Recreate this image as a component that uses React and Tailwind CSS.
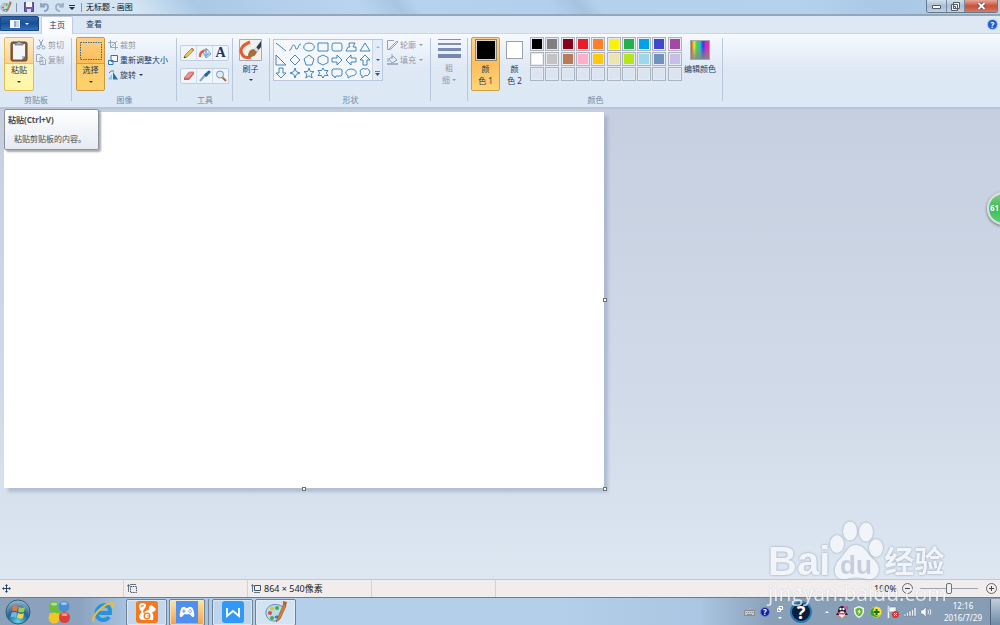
import React, { useState } from 'react';

const PALETTE = [
    '#000000', '#7f7f7f', '#880015', '#ed1c24', '#ff7f27', '#fff200', '#22b14c', '#00a2e8', '#3f48cc', '#a349a4',
    '#ffffff', '#c3c3c3', '#b97a57', '#ffaec9', '#ffc90e', '#efe4b0', '#b5e61d', '#99d9ea', '#7092be', '#c8bfe7',
    null, null, null, null, null, null, null, null, null, null,
];

const SHAPES = [
    { name: '直线', d: 'M1 2L11 10' },
    { name: '曲线', d: 'M0 9C2 11 3 3 5 4S6 9 8 8S9 3 12 3' },
    { name: '椭圆形', d: 'M6 2C13 2 13 10 6 10S-1 2 6 2Z' },
    { name: '矩形', d: 'M1 2H11V10H1Z' },
    { name: '圆角矩形', d: 'M3 2H9Q11 2 11 4V8Q11 10 9 10H3Q1 10 1 8V4Q1 2 3 2Z' },
    { name: '多边形', d: 'M4 2H10L8 6H11V10H1L3 6H5L4 4Z' },
    { name: '三角形', d: 'M6 2L11 10H1Z' },
    { name: '直角三角形', d: 'M1 1V11H11Z' },
    { name: '菱形', d: 'M6 1L11 6L6 11L1 6Z' },
    { name: '五边形', d: 'M6 1L11 5L9 11H3L1 5Z' },
    { name: '六边形', d: 'M6 1L11 3.500V8.500L6 11L1 8.500V3.500Z' },
    { name: '右箭头', d: 'M1 4H6V1L11 6L6 11V8H1Z' },
    { name: '左箭头', d: 'M11 4H6V1L1 6L6 11V8H11Z' },
    { name: '上箭头', d: 'M4 11V6H1L6 1L11 6H8V11Z' },
    { name: '下箭头', d: 'M4 1V6H1L6 11L11 6H8V1Z' },
    { name: '四角星', d: 'M6 1L7.300 4.700L11 6L7.300 7.300L6 11L4.700 7.300L1 6L4.700 4.700Z' },
    { name: '五角星', d: 'M6 1L7.400 4.600H11L8.200 7L9.200 11L6 8.700L2.800 11L3.800 7L1 4.600H4.600Z' },
    { name: '六角星', d: 'M6 1L7.500 3.500H11L9.300 6L11 8.500H7.500L6 11L4.500 8.500H1L2.700 6L1 3.500H4.500Z' },
    { name: '圆角标注', d: 'M2 2H10L11 3V8L10 9H5L4 11L3 9H2L1 8V3Z' },
    { name: '椭圆标注', d: 'M6 2C13 2 13 9 6 9L3 11V8.500C-1 7 1 2 6 2Z' },
    { name: '云形标注', d: 'M3 2Q5 1 6 2Q9 1 10 3Q12 5 10 7Q9 9.500 6 8.500L3 11V8.500Q0 8 1.500 5.500Q0 3 3 2Z' },
];

const Caret = ({ className = '' }) => (
    <svg viewBox="0 0 4 2" className={`w-[4px] h-[2px] shrink-0 ${className}`} fill="currentColor"><path d="M0 0H4L2 2Z" /></svg>
);

const Group = ({ label, className = '', children }) => (
    <section aria-label={label} className={`relative shrink-0 flex flex-col pt-[3px] ${className}`}>
        <div className="flex h-[56px]">{children}</div>
        {label && <div className="text-center text-[8px] leading-[14px] text-[#7487a4]">{label}</div>}
        <span className="absolute right-0 top-[4px] bottom-[6px] w-px bg-[#b9c7dc]"></span>
    </section>
);

const SmallButton = ({ icon, label, muted, caret }) => (
    <button className={`flex items-center gap-[2px] h-[15px] text-[8px] whitespace-nowrap ${muted ? 'text-[#919aa8]' : 'text-[#1e395b]'}`}>
        {icon}
        <span>{label}</span>
        {caret && <Caret className="ml-px" />}
    </button>
);

const ToolButton = ({ label, children }) => (
    <button aria-label={label} className="flex-1 h-full flex items-center justify-center border-r border-[#d3deec] last:border-r-0">
        <svg viewBox="0 0 12 12" className="w-[12px] h-[12px]">{children}</svg>
    </button>
);

const PaintIcon = ({ className }) => (
    <svg viewBox="0 0 24 24" className={className}>
        <path d="M2 14C1 7 8 3 15 5C21 7 20 11 17 12C15 13 18 16 15 19C11 23 3 21 2 14Z" fill="#b6dcf0" stroke="#5f91b5" />
        <circle cx="6" cy="13" r="2" fill="#e8483e" />
        <circle cx="8" cy="8.500" r="2" fill="#e9bf35" />
        <circle cx="13" cy="8" r="2" fill="#4daa43" />
        <circle cx="8" cy="18" r="2" fill="#55a34c" />
        <ellipse cx="13" cy="17" rx="2.500" ry="1.500" fill="#4478c0" />
        <path d="M20 3L15 15L12 22L16 19L22 6Z" fill="#cf8337" stroke="#985a22" strokeWidth=".7" />
        <path d="M19 1L23 2L22 6L19 5Z" fill="#b3663a" />
    </svg>
);

const TitleBar = () => (
    <header className="relative h-[16px] shrink-0 flex items-center bg-[linear-gradient(55deg,#d3e3f1_0%,#d3e4f3_14%,#a9c9e4_20%,#b3cfeb_28%,#b9d4ee_36%,#a8c6e2_40%,#b5d2ee_42%,#b2d0ed_55%,#a5c3e0_58%,#b4d1ec_60%,#b4d2ed_80%,#a9c8e6_88%,#b5d0ea_100%)] border-b-2 border-[#95a6b8]">
        <PaintIcon className="w-[12px] h-[12px]" />
        <span className="ml-[4px] w-px h-[9px] bg-[#8296ad]"></span>
        <button aria-label="保存" className="ml-[7px]">
            <svg viewBox="0 0 10 10" className="w-[10px] h-[10px]">
                <path d="M.5 .5H9.500V9.500H.5Z" fill="#765caf" stroke="#57428f" />
                <path d="M2 0H8V5H2Z" fill="#f3f3fb" />
                <path d="M3 7H7V10H3Z" fill="#d6d7e6" />
            </svg>
        </button>
        <button aria-label="撤消" className="ml-[6px]">
            <svg viewBox="0 0 10 10" className="w-[10px] h-[10px]" fill="none" stroke="#8aa3c2" strokeWidth="1.8"><path d="M1 1V4.500H5M1.500 4C4 1 8 2 8 5S6 9 4 9" /></svg>
        </button>
        <button aria-label="恢复" className="ml-[4px]">
            <svg viewBox="0 0 10 10" className="w-[10px] h-[10px]" fill="none" stroke="#9ab0ca" strokeWidth="1.8"><path d="M9 1V4.500H5M8.500 4C6 1 2 2 2 5S4 9 6 9" /></svg>
        </button>
        <button aria-label="自定义快速访问工具栏" className="ml-[5px]">
            <svg viewBox="0 0 6 6" className="w-[6px] h-[6px]" fill="#26313f"><path d="M0 1H6V2H0ZM0 3H6L3 6Z" /></svg>
        </button>
        <span className="ml-[6px] w-px h-[9px] bg-[#8296ad]"></span>
        <h1 className="ml-[4px] text-[8px] leading-[14px] text-[#0c1118]">无标题 - 画图</h1>
        <div className="ml-auto mr-[2px] h-[13px] self-start flex border border-t-0 border-[#64798e] rounded-b-[3px] overflow-hidden">
            <button aria-label="最小化" className="w-[20px] flex items-center justify-center bg-linear-to-b from-[#d3e0ec] via-[#a9bdd2] to-[#bfd2e5] border-r border-[#758a9e]">
                <svg viewBox="0 0 9 4" className="w-[9px] h-[4px] mt-px"><path d="M.5 .5H8.500V3.500H.5Z" fill="#fff" stroke="#535b68" /></svg>
            </button>
            <button aria-label="还原" className="w-[18px] flex items-center justify-center bg-linear-to-b from-[#d3e0ec] via-[#a9bdd2] to-[#bfd2e5] border-r border-[#758a9e]">
                <svg viewBox="0 0 9 9" className="w-[9px] h-[9px]" fill="#f2f4f7" stroke="#535b68"><path d="M2.500 .5H8.500V6.500H2.500ZM.5 2.500H6.500V8.500H.5ZM2.500 4.500H4.500V6.500H2.500Z" /></svg>
            </button>
            <button aria-label="关闭" className="w-[32px] flex items-center justify-center bg-linear-to-b from-[#e8a697] via-[#c4513a] to-[#d97a60]">
                <svg viewBox="0 0 9 8" className="w-[9px] h-[8px]"><path d="M1.500 1L7.500 7M7.500 1L1.500 7" stroke="#5c4448" strokeWidth="3.500" /><path d="M1.500 1L7.500 7M7.500 1L1.500 7" stroke="#fff" strokeWidth="2" /></svg>
            </button>
        </div>
    </header>
);

const TabRow = () => (
    <nav className="relative h-[18px] shrink-0 flex items-end bg-[#dee8f5] border-b border-[#cdd6e6] text-[8px] text-[#1e395b]">
        <button aria-label="文件" className="mb-[2px] w-[39px] h-[15px] flex items-center justify-center gap-[5px] text-white bg-linear-to-b from-[#2c66ac] via-[#1b4e97] to-[#3072bb] border border-[#17458a] rounded-tr-[2px]">
            <svg viewBox="0 0 10 8" className="w-[10px] h-[8px]"><path d="M0 0H10V8H0Z" fill="#f5f8fd" /><path d="M5 1V7" stroke="#2c5f9e" /><path d="M6 2H9M6 4H9M6 6H9" stroke="#7798c1" strokeWidth=".7" /></svg>
            <Caret />
        </button>
        <button className="ml-[2px] -mb-px w-[32px] h-[18px] pb-px bg-[#fafcff] border border-b-0 border-[#c0cce0] rounded-t-[2px]">主页</button>
        <button className="ml-[5px] w-[32px] h-[18px]">查看</button>
        <button aria-label="帮助" className="ml-auto mr-[3px] mb-[4px] w-[9px] h-[9px] rounded-full bg-[#1e5ec9] ring-1 ring-[#a5c0e8] text-white font-bold text-[8px] leading-[9px]">?</button>
    </nav>
);

const Ribbon = () => (
    <div className="relative z-10 h-[75px] shrink-0 flex bg-linear-to-b from-[#f7faff] via-[#dfe9f5] via-45% to-[#dce8f6] border-b-2 border-[#b6c5da]">
        <Group label="剪贴板" className="w-[72px]">
            <button aria-describedby="paste-tip" className="ml-[4px] w-[30px] h-[54px] flex flex-col items-center text-[8px] text-[#1e395b] rounded-[2px] border border-[#e5bb58] bg-linear-to-b from-[#fbe3b6] via-[#fff6b8] to-[#fff6a6]">
                <span className="w-full h-[26px] flex items-center justify-center bg-linear-to-b from-[#fdeecf] to-[#fbd28a] border-b border-[#e6c36c]">
                    <svg viewBox="0 0 18 22" className="w-[18px] h-[22px]">
                        <rect x="1" y="2" width="16" height="19" rx="1.500" fill="#8a6243" stroke="#5d4131" />
                        <path d="M3 4H15V16L12 19.500H3Z" fill="#f3f5f9" />
                        <path d="M15 16H12V19.500Z" fill="#aab4c2" />
                        <path d="M5 5V3H7Q9 -1 11 3H13V5Z" fill="#aaafb7" stroke="#666b73" strokeWidth=".7" />
                    </svg>
                </span>
                <span className="leading-[12px]">粘贴</span>
                <Caret className="mt-[5px]" />
            </button>
            <div className="ml-[2px] flex flex-col">
                <SmallButton muted label="剪切" icon={
                    <svg viewBox="0 0 10 10" className="w-[10px] h-[11px]" fill="none" stroke="#8fa3bd"><path d="M3 0L6.500 7M7 0L3.500 7" /><circle cx="2.500" cy="8" r="1.500" /><circle cx="7.500" cy="8" r="1.500" /></svg>
                } />
                <SmallButton muted label="复制" icon={
                    <svg viewBox="0 0 10 11" className="w-[10px] h-[11px]" fill="#eef3fa" stroke="#9aabc4"><path d="M.5 .5H4L6 2.500V7.500H.5ZM4 3.500H7.500L9.500 5.500V10.500H4Z" /><path d="M5.500 7H8M5.500 9H8" /></svg>
                } />
            </div>
            <div id="paste-tip" role="tooltip" className="absolute left-[4px] top-full mt-[2px] w-[95px] h-[41px] pt-[4px] pl-[3px] whitespace-nowrap text-[8px] text-[#4c4c4c] bg-linear-to-b from-white to-[#e5eaf4] border border-[#8d919a] rounded-[2px] shadow-[2px_2px_2px_#00000055]">
                <p className="font-bold leading-[12px]">粘贴(Ctrl+V)</p>
                <p className="mt-[7px] ml-[6px] leading-[12px]">粘贴剪贴板的内容。</p>
            </div>
        </Group>

        <Group label="图像" className="w-[105px]">
            <button className="ml-[4px] w-[29px] h-[54px] shrink-0 flex flex-col items-center text-[8px] text-[#1e395b] rounded-[2px] border border-[#c9983f] bg-linear-to-b from-[#fdc865] to-[#ffd06c]">
                <span className="w-full h-[26px] flex items-center justify-center bg-linear-to-b from-[#fbcf83] to-[#fdbd55] border-b border-[#d79e37]">
                    <svg viewBox="0 0 22 18" className="w-[22px] h-[18px]"><path d="M.5 .5H21.500V17.500H.5Z" fill="none" stroke="#3b6791" strokeDasharray="1.500 1" /></svg>
                </span>
                <span className="leading-[12px]">选择</span>
                <Caret className="mt-[5px]" />
            </button>
            <div className="ml-[3px] flex flex-col items-start">
                <SmallButton muted label="裁剪" icon={
                    <svg viewBox="0 0 10 10" className="w-[10px] h-[10px]" fill="none" stroke="#9aa9bf"><path d="M2.500 0V7.500H10M0 2.500H7.500V10M3 7L9 1" /></svg>
                } />
                <SmallButton label="重新调整大小" icon={
                    <svg viewBox="0 0 10 10" className="w-[10px] h-[10px]" fill="#f4f9ff" stroke="#2e74b5"><path d="M3 .5H9.500V6.500H3ZM.5 5.500H5V9.500H.5Z" /></svg>
                } />
                <SmallButton label="旋转" caret icon={
                    <svg viewBox="0 0 10 10" className="w-[10px] h-[10px]"><path d="M5 9.500V2L10 9.500Z" fill="#2674ae" /><path d="M0 9.500L4 4V9.500Z" fill="#93c6e9" /><path d="M1 3Q3 0 6 1" fill="none" stroke="#4083b7" /></svg>
                } />
            </div>
        </Group>

        <Group label="工具" className="w-[56px]">
            <div className="ml-[3px] mt-[8px] w-[49px] flex flex-col gap-[7px]">
                <div className="h-[16px] flex rounded-[2px] border border-[#c1cee0] bg-[#eff5fc]">
                    <ToolButton label="铅笔">
                        <path d="M1 11L2 8L9 1L11 3L4 10Z" fill="#efc250" stroke="#9c793c" strokeWidth=".7" />
                        <path d="M8 2L9 1L11 3L10 4Z" fill="#d9766a" />
                        <path d="M1 11L1.600 9L3 10.400Z" fill="#333" />
                    </ToolButton>
                    <ToolButton label="填充">
                        <path d="M4 5L8 2L12 7L7 11Z" fill="#d5e6f5" stroke="#5f8dbd" strokeWidth=".8" />
                        <path d="M0 10Q-1 4 6 2L5 5Q2 6 2 10Z" fill="#e35b3b" />
                        <path d="M7 6V1" stroke="#6585aa" />
                        <path d="M5 7L11 6L7 10Z" fill="#6faede" />
                    </ToolButton>
                    <button aria-label="文本" className="flex-1 font-['Liberation_Serif',serif] font-bold text-[14px] leading-[14px] text-[#1f3657]">A</button>
                </div>
                <div className="h-[16px] flex rounded-[2px] border border-[#c1cee0] bg-[#eff5fc]">
                    <ToolButton label="橡皮擦">
                        <path d="M1 8L6 2H11L6 9Z" fill="#ee918b" stroke="#c3605c" strokeWidth=".6" />
                        <path d="M1 8H6V10H1ZM6 8L11 2V4L6 10Z" fill="#c86762" />
                    </ToolButton>
                    <ToolButton label="颜色选取器">
                        <path d="M1 11L7 4" stroke="#7fa8cc" strokeWidth="2" />
                        <path d="M6 4L8 6" stroke="#234e7d" strokeWidth="2" />
                        <path d="M7 5L10 2" stroke="#2f619b" strokeWidth="3" strokeLinecap="round" />
                    </ToolButton>
                    <ToolButton label="放大镜">
                        <path d="M7 7L11 11" stroke="#a37045" strokeWidth="2" />
                        <circle cx="5" cy="4.500" r="3.500" fill="#dceefa" stroke="#8693a4" />
                    </ToolButton>
                </div>
            </div>
        </Group>

        <Group className="w-[37px]">
            <button className="ml-[5px] w-[25px] h-[54px] flex flex-col items-center text-[8px] text-[#1e395b]">
                <svg viewBox="0 0 23 22" className="mt-[2px] w-[23px] h-[22px] shrink-0">
                    <path d="M.5 .5H22.500V21.500H.5Z" fill="#f4f1ec" stroke="#a6acb3" />
                    <path d="M11 3Q-1 8 3 15Q5 20 12 18" fill="none" stroke="#e65b2b" strokeWidth="3" />
                    <path d="M9 18Q9 10 15 10L18 13Q16 19 9 18Z" fill="#a56f3c" />
                    <path d="M16 10L22 2V8L18 13Z" fill="#2c3e54" />
                    <path d="M15 10L17 8L20 11L18 13Z" fill="#d1d8df" />
                </svg>
                <span className="mt-[2px] leading-[12px]">刷子</span>
                <Caret className="mt-[4px]" />
            </button>
        </Group>

        <Group label="形状" className="w-[161px]">
            <div className="ml-[3px] mt-[2px] w-[110px] h-[42px] shrink-0 flex border border-[#b7c8de] bg-[#f4f8fd]">
                <div className="w-[98px] grid grid-cols-7">
                    {SHAPES.map(s => (
                        <button key={s.name} aria-label={s.name} className="flex items-center justify-center">
                            <svg viewBox="0 0 12 12" className="w-[12px] h-[12px]" fill="none" stroke="#3279b1" strokeWidth=".9"><path d={s.d} /></svg>
                        </button>
                    ))}
                </div>
                <div className="w-[10px] flex flex-col border-l border-[#c9d6e6] bg-[#e4edf7] text-[#44566e]">
                    <button aria-label="上一行" className="flex-1 flex items-center justify-center text-[#a9b4c3]"><Caret className="rotate-180" /></button>
                    <button aria-label="下一行" className="flex-1 flex items-center justify-center"><Caret /></button>
                    <button aria-label="更多" className="flex-1 flex items-center justify-center">
                        <svg viewBox="0 0 6 6" className="w-[5px] h-[5px]" fill="currentColor"><path d="M0 0H6V1H0ZM0 2.500H6L3 6Z" /></svg>
                    </button>
                </div>
            </div>
            <div className="ml-[4px] flex flex-col items-start">
                <SmallButton muted caret label="轮廓" icon={
                    <svg viewBox="0 0 11 10" className="w-[11px] h-[10px]" fill="none" stroke="#8fa2bc"><path d="M7 .5H.5V9.500H3M3 8L10 1L11 2L4 9L2 9.500Z" /></svg>
                } />
                <SmallButton muted caret label="填充" icon={
                    <svg viewBox="0 0 11 11" className="w-[11px] h-[11px]"><path d="M2 5L6 2L10 6L5 9Z" fill="#e8eef6" stroke="#8fa2bc" /><path d="M5 5V0M1 8V4" stroke="#8fa2bc" /><path d="M0 9H11V11H0Z" fill="#a4b1c9" /></svg>
                } />
            </div>
        </Group>

        <Group className="w-[37px]">
            <button className="ml-[6px] w-[24px] h-[54px] flex flex-col items-center text-[8px] text-[#919aa8]">
                <span className="mt-[2px] mb-[4px] w-[23px] flex flex-col gap-[3px]">
                    <span className="h-px bg-[#8592ad]"></span>
                    <span className="h-[2px] bg-[#8190b0]"></span>
                    <span className="h-[3px] bg-[#7a8bb0]"></span>
                    <span className="h-[4px] bg-[#7488b1]"></span>
                </span>
                <span className="leading-[12px]">粗</span>
                <span className="leading-[12px] flex items-center gap-[2px]">细<Caret /></span>
            </button>
        </Group>

        <Group label="颜色" className="w-[255px]">
            <button className="ml-[3px] w-[29px] h-[54px] shrink-0 flex flex-col items-center text-[8px] leading-[12px] text-[#1e395b] rounded-[2px] border border-[#cf9f43] bg-linear-to-b from-[#fbd18c] via-[#fdbf5a] to-[#ffd577]">
                <span className="mt-px mb-[2px] w-[22px] h-[22px] bg-black border border-[#8a8578] ring-1 ring-inset ring-[#dcd5c5]"></span>
                <span>颜</span>
                <span>色 1</span>
            </button>
            <button className="w-[29px] h-[54px] shrink-0 flex flex-col items-center text-[8px] leading-[12px] text-[#1e395b]">
                <span className="mt-[4px] mb-[4px] w-[17px] h-[18px] bg-white border border-[#9ca2aa]"></span>
                <span>颜</span>
                <span>色 2</span>
            </button>
            <div className="ml-px w-[153px] shrink-0 grid grid-cols-10 gap-y-px content-start">
                {PALETTE.map((c, i) => (
                    <button key={i} aria-label={c || '自定义颜色'} style={{ backgroundColor: c || '#dbe5f2' }}
                        className="w-[14px] h-[14px] border border-[#aeb4bd] ring-1 ring-inset ring-[#e6eaf0]"></button>
                ))}
            </div>
            <button className="w-[34px] h-[54px] shrink-0 flex flex-col items-center text-[8px] text-[#1e395b] whitespace-nowrap">
                <span className="mt-[3px] w-[20px] h-[20px] border border-[#a4a8ae] bg-[linear-gradient(to_right,#ee342c,#f3e537,#32d846,#29bedb,#3d37d8,#cc2bd7,#ef3274)]">
                    <span className="block w-full h-full bg-linear-to-b from-transparent from-30% to-[#888888dd]"></span>
                </span>
                <span className="mt-[2px] leading-[13px]">编辑颜色</span>
            </button>
        </Group>
    </div>
);

const Handle = ({ className }) => (
    <span className={`absolute w-[4px] h-[4px] bg-white border border-[#6c716f] ${className}`}></span>
);

const Workspace = () => (
    <main className="relative flex-1 min-h-0 pt-[3px] pl-[4px] bg-linear-to-b from-[#c6cfdf] via-[#d0dae8] via-60% to-[#dde7f2]">
        <div className="relative w-[600px] h-[376px] bg-white shadow-[4px_4px_3px_#8b9dbd80]">
            <Handle className="-right-[3px] top-1/2 -mt-[2px]" />
            <Handle className="-bottom-[3px] left-1/2 -ml-[2px]" />
            <Handle className="-right-[3px] -bottom-[3px]" />
        </div>
        <div className="absolute -right-[20px] top-[83px] w-[33px] h-[33px] pl-px rounded-full border-2 border-[#d9e0dd] bg-linear-to-b from-[#77d07a] via-[#3cbb57] to-[#5cd46d] shadow-[0_1px_3px_#0008] text-white font-bold text-[8px] leading-[28px]">61</div>
    </main>
);

const Cell = ({ children }) => (
    <div className="w-[124px] shrink-0 flex items-center gap-[3px] pl-[3px] border-r border-[#d5d2d3]">{children}</div>
);

const StatusBar = () => {
    const [zoom, setZoom] = useState(50);
    return (
        <footer className="h-[18px] shrink-0 flex text-[9px] text-[#1e1e1e] bg-[#f0edec] border-t border-[#c5c8cc]">
            <Cell>
                <svg viewBox="0 0 9 9" className="-ml-px w-[9px] h-[9px]" stroke="#24415f" fill="#24415f"><path d="M4.500 1V8M1 4.500H8" /><path d="M4.500 0L6 2H3ZM4.500 9L6 7H3ZM0 4.500L2 3V6ZM9 4.500L7 3V6Z" stroke="none" /></svg>
            </Cell>
            <Cell>
                <svg viewBox="0 0 10 9" className="w-[10px] h-[9px]" fill="none" stroke="#40556c"><path d="M3.500 2.500H9.500V8.500H3.500Z" strokeDasharray="1.500 .8" /><path d="M1.500 1V8M0 2.500L1.500 .5L3 2.500M3 .5H9" strokeWidth=".8" /></svg>
            </Cell>
            <Cell>
                <svg viewBox="0 0 10 9" className="w-[10px] h-[9px]" fill="none" stroke="#40556c"><path d="M3.500 1.500H9.500V6.500H3.500Z" /><path d="M1.500 1V8M0 2.500L1.500 .5L3 2.500M3 8.500H9" strokeWidth=".8" /></svg>
                <span className="whitespace-nowrap">864 × 540像素</span>
            </Cell>
            <Cell />
            <div className="ml-auto mr-[3px] flex items-center">
                <label htmlFor="zoom">100%</label>
                <button aria-label="缩小" onClick={() => setZoom(zoom - 10)} className="ml-[5px] w-[11px] h-[11px] rounded-full border border-[#666b72] flex items-center justify-center"><span className="w-[5px] h-px bg-[#404650]"></span></button>
                <input id="zoom" type="range" value={zoom} onChange={e => setZoom(Number(e.target.value))}
                    className="ml-[7px] w-[58px] h-[12px] appearance-none bg-transparent [&::-webkit-slider-runnable-track]:h-px [&::-webkit-slider-runnable-track]:bg-[#a2a6ab] [&::-webkit-slider-thumb]:appearance-none [&::-webkit-slider-thumb]:-mt-[5px] [&::-webkit-slider-thumb]:w-[6px] [&::-webkit-slider-thumb]:h-[11px] [&::-webkit-slider-thumb]:rounded-[2px] [&::-webkit-slider-thumb]:border [&::-webkit-slider-thumb]:border-[#6e747b] [&::-webkit-slider-thumb]:bg-[#eef0f2]" />
                <button aria-label="放大" onClick={() => setZoom(zoom + 10)} className="ml-[8px] w-[11px] h-[11px] rounded-full border border-[#666b72] flex items-center justify-center">
                    <svg viewBox="0 0 5 5" className="w-[5px] h-[5px]" stroke="#404650"><path d="M2.500 0V5M0 2.500H5" /></svg>
                </button>
            </div>
        </footer>
    );
};

const TaskButton = ({ label, className, children }) => (
    <button aria-label={label} className={`h-[27px] shrink-0 flex items-center justify-center rounded-[2px] border border-[#6f8194] ring-1 ring-inset ring-[#e6f0f9b0] ${className}`}>{children}</button>
);

const Taskbar = () => (
    <div className="h-[28px] shrink-0 flex items-center pt-px border-t border-[#6c7d90] bg-[linear-gradient(to_right,#8ba0ba_0%,#8ba3c0_8%,#a9c5e2_13%,#b3cfea_30%,#b3cfea_55%,#aac6e2_70%,#8aa0b9_77%,#869cb4_100%)]">
        <button aria-label="开始" className="ml-[5px]">
            <svg viewBox="0 0 26 26" className="w-[26px] h-[26px]">
                <defs>
                    <radialGradient id="orb" cx=".5" cy=".9" r=".9"><stop offset="0" stopColor="#5fd3ed" /><stop offset=".5" stopColor="#216593" /><stop offset="1" stopColor="#a3bccd" /></radialGradient>
                </defs>
                <circle cx="13" cy="13" r="12" fill="url(#orb)" stroke="#385c7d" />
                <path d="M8 7Q10 6 13 8L12 12.500Q9 11 7 12.500Z" fill="#ed7338" />
                <path d="M14 8Q17 10 20 8L19 13Q16 14 13 12.500Z" fill="#9cc950" />
                <path d="M6.500 14Q9 12 12 14L11 18.500Q8 17 5.500 18.500Z" fill="#70b7e8" />
                <path d="M13 14Q16 16 19 14L18 19Q15 20.500 12 18.500Z" fill="#fad345" />
            </svg>
        </button>
        <button aria-label="软件管家" className="ml-[16px]">
            <svg viewBox="0 0 24 24" className="w-[24px] h-[24px]">
                <path d="M2 7Q2 2 7 1Q12 1 11 6Q11 11 16 12Q8 15 4 12Q2 10 2 7Z" fill="#6cbd3d" />
                <circle cx="17" cy="6.500" r="5.500" fill="#468fd4" />
                <circle cx="7" cy="18" r="5.500" fill="#f2c625" />
                <path d="M2 13Q8 15 12 13V20L7 23Z" fill="#f2c625" />
                <circle cx="17.500" cy="17.500" r="5.500" fill="#d9413d" />
                <ellipse cx="7" cy="4" rx="3" ry="1.500" fill="#b5df8c" />
                <ellipse cx="17" cy="3.500" rx="3" ry="1.500" fill="#9bc6ec" />
                <ellipse cx="17.500" cy="14.500" rx="3" ry="1.500" fill="#ee958f" />
            </svg>
        </button>
        <button aria-label="Internet Explorer" className="ml-[20px]">
            <svg viewBox="0 0 24 24" className="w-[24px] h-[24px]" fill="none">
                <path d="M6 13H19C20 6 14 4 10 6C3 10 5 20 12 20Q16 20 18 17" stroke="#2594dd" strokeWidth="4" />
                <path d="M3 22C-1 17 14 2 22 3Q23 4 21 8" stroke="#f0bd31" strokeWidth="2" />
            </svg>
        </button>
        <TaskButton label="UC浏览器" className="ml-[11px] w-[41px] bg-[#c4d7ea]">
            <svg viewBox="0 0 22 22" className="w-[22px] h-[22px]">
                <rect width="22" height="22" rx="3" fill="#f5791c" />
                <path d="M4 9Q1 2 7 2Q12 3 9 7Q6 10 8 13Q9 9 13 9Q12 6 15 4Q17 5 20 8Q19 11 16 11Q18 13 17 19H8Q3 19 3 15Q4 12 6 11Z" fill="#fff" />
                <circle cx="11" cy="15" r="2.800" fill="none" stroke="#f5791c" strokeWidth="1.300" />
                <path d="M11 15H14M5 6Q6 4 8 5" fill="none" stroke="#f5791c" strokeWidth="1.200" />
            </svg>
        </TaskButton>
        <TaskButton label="游戏中心" className="ml-[2px] w-[36px] bg-linear-to-b from-[#fbe59b] to-[#f2a04e]">
            <span className="w-[22px] h-[22px] flex items-center justify-center bg-[#4e8ff0]">
                <svg viewBox="0 0 18 13" className="w-[16px] h-[12px]">
                    <path d="M4 1H7L8 2H10L11 1H14Q16 2 17 8Q18 13 15 12L12 9H6L3 12Q0 13 1 8Q2 2 4 1Z" fill="#fff" />
                    <path d="M3.500 5.500H7.500M5.500 3.500V7.500" stroke="#4e8ff0" />
                    <circle cx="12.500" cy="4" r=".8" fill="#4e8ff0" /><circle cx="12.500" cy="7" r=".8" fill="#4e8ff0" /><circle cx="11" cy="5.500" r=".8" fill="#4e8ff0" /><circle cx="14" cy="5.500" r=".8" fill="#4e8ff0" />
                </svg>
            </span>
        </TaskButton>
        <span className="w-[4px] h-[27px] bg-[#aac3dc] border-r border-[#71869d]"></span>
        <TaskButton label="WPS" className="ml-[3px] w-[41px] bg-[#bed4eb]">
            <svg viewBox="0 0 22 22" className="w-[22px] h-[22px]"><rect width="22" height="22" rx="3" fill="#3199f5" /><path d="M5 7V15L11 10L17 15V7" fill="none" stroke="#fff" strokeWidth="1.800" /></svg>
        </TaskButton>
        <TaskButton label="画图" className="ml-[2px] w-[41px] bg-[#d4e3f1]">
            <PaintIcon className="w-[24px] h-[24px]" />
        </TaskButton>

        <div className="ml-auto h-full flex items-center gap-[5px] text-white">
            <svg viewBox="0 0 11 8" className="w-[11px] h-[8px]"><path d="M.5 2.500H10.500V7.500H.5Z" fill="#c3c7c9" stroke="#868d93" /><path d="M2 4.500H9" stroke="#8e959b" strokeDasharray="1 1" /><path d="M3 6.500H8" stroke="#8e959b" /><path d="M5.500 2V.5H8" fill="none" stroke="#a9afb5" /></svg>
            <span className="w-[10px] h-[10px] rounded-full bg-[#101fa5] border border-[#6980cf] text-center font-bold text-[8px] leading-[8px]">?</span>
            <span className="w-[8px] flex flex-col items-center gap-[5px] mx-px">
                <svg viewBox="0 0 6 6" className="w-[6px] h-[6px]" fill="none" stroke="#fff"><path d="M2 .5H5.500V3.500H2ZM.5 2.500H3.500V5.500H.5Z" /></svg>
                <Caret />
            </span>
            <span className="w-[22px] h-[22px] rounded-full bg-[#071e3d] border-2 border-[#2576b4] text-center font-bold text-[18px] leading-[18px]">?</span>
            <button aria-label="显示隐藏的图标" className="ml-[8px] mr-[2px]"><Caret className="rotate-180 block" /></button>
            <svg viewBox="0 0 12 12" className="w-[12px] h-[12px]">
                <ellipse cx="6" cy="5.500" rx="4" ry="5.500" fill="#1d1820" /><path d="M2 6L0 9L3 9M10 6L12 9L9 9" fill="#1d1820" />
                <ellipse cx="6" cy="8.500" rx="3" ry="3" fill="#fff" /><path d="M2 6Q6 8 10 6V8Q6 9 2 8Z" fill="#e53a88" />
                <circle cx="4.500" cy="3" r="1.200" fill="#fff" /><circle cx="7.500" cy="3" r="1.200" fill="#fff" /><path d="M3.500 5H8.500L6 6.500Z" fill="#f6b52a" /><path d="M1.500 10.500H5V12H1.500ZM7 10.500H10.500V12H7Z" fill="#f6742a" />
                <path d="M7 1L12 0V4Z" fill="#f047a2" />
            </svg>
            <svg viewBox="0 0 12 12" className="w-[12px] h-[12px]"><path d="M6 0L11 2V6Q10 10 6 12Q2 10 1 6V2Z" fill="#f1f8ea" /><path d="M6 1.500L9.500 3V6Q9 9 6 10.500Q3 9 2.500 6V3Z" fill="#68af34" /><path d="M7 3L4.500 6H6L5 9L8 5.500H6.500Z" fill="#fff" /></svg>
            <svg viewBox="0 0 12 12" className="w-[12px] h-[12px]"><circle cx="6" cy="6" r="5.500" fill="#f7e336" /><path d="M1 9Q-1 3 5 1Q2 4 4 8Q6 11 10 9Q6 13 1 9Z" fill="#35a233" /><path d="M6.500 3V9M3.500 6H9.500" stroke="#12711d" strokeWidth="2" /></svg>
            <svg viewBox="0 0 12 12" className="w-[12px] h-[12px]"><path d="M1.500 0V12" stroke="#f4f4f4" strokeWidth="1.500" /><path d="M2 1H9V6H2Z" fill="#f4f4f4" stroke="#6c7885" strokeWidth=".5" /><circle cx="8.500" cy="8.500" r="3.500" fill="#dc3732" /><path d="M7 7L10 10M10 7L7 10" stroke="#fff" /></svg>
            <svg viewBox="0 0 12 10" className="w-[12px] h-[10px]" fill="#eef2f5" stroke="#5d6d7f" strokeWidth=".4"><path d="M0 7H2V9H0ZM2.500 5.500H4.500V9H2.500ZM5 4H7V9H5ZM7.500 2.500H9.500V9H7.500ZM10 .5H12V9H10Z" /></svg>
            <svg viewBox="0 0 11 10" className="w-[11px] h-[10px]"><path d="M0 3H2L5 0V10L2 7H0Z" fill="#f5f7f9" stroke="#5a6a7b" strokeWidth=".4" /><path d="M7 3Q8 5 7 7M9 2Q10.500 5 9 8" fill="none" stroke="#e8eef4" /></svg>
            <time className="ml-[4px] w-[44px] text-center text-[8px] leading-[12px]"><span className="block">12:16</span><span className="block">2016/7/29</span></time>
            <button aria-label="显示桌面" className="w-[10px] h-full border-l border-[#50647a] bg-linear-to-b from-[#c0cedc] to-[#708ba7]"></button>
        </div>
    </div>
);

const Watermark = () => (
    <div className="pointer-events-none absolute right-[55px] bottom-[20px] z-20 w-[177px] flex flex-col">
        <div className="flex items-end h-[60px] text-[#f4f7fc] opacity-90 [filter:drop-shadow(0_0_1px_#8995aa)]">
            <span className="font-['Liberation_Sans',sans-serif] font-bold text-[40px] leading-[40px]">Bai</span>
            <svg viewBox="0 0 54 60" className="w-[54px] h-[60px] shrink-0" fill="currentColor">
                <ellipse cx="7" cy="23" rx="7" ry="9" /><ellipse cx="20" cy="10" rx="7" ry="9.500" /><ellipse cx="36" cy="11" rx="7" ry="9.500" /><ellipse cx="46" cy="27" rx="7" ry="9" />
                <path d="M26 24C35 24 37 33 44 39C54 48 47 60 37 58Q26 55 16 58C4 60 1 47 10 38C16 32 18 24 26 24Z" />
                <text x="26" y="53" textAnchor="middle" fontSize="26" fontWeight="bold" fontFamily="Liberation Sans, sans-serif" fill="#c3cbdc">du</text>
            </svg>
            <span className="text-[30px] leading-[40px] font-bold whitespace-nowrap">经验</span>
        </div>
        <span className="font-['Open_Sans',sans-serif] text-[21px] leading-[24px] text-white opacity-75 [text-shadow:0_0_1px_#8995aa]">jingyan.baidu.com</span>
    </div>
);

const App = () => (
    <div className="relative h-screen flex flex-col overflow-hidden font-['Noto_Sans','Noto_Sans_CJK_SC',sans-serif]">
        <TitleBar />
        <TabRow />
        <Ribbon />
        <Workspace />
        <StatusBar />
        <Taskbar />
        <Watermark />
    </div>
);

export default App;
